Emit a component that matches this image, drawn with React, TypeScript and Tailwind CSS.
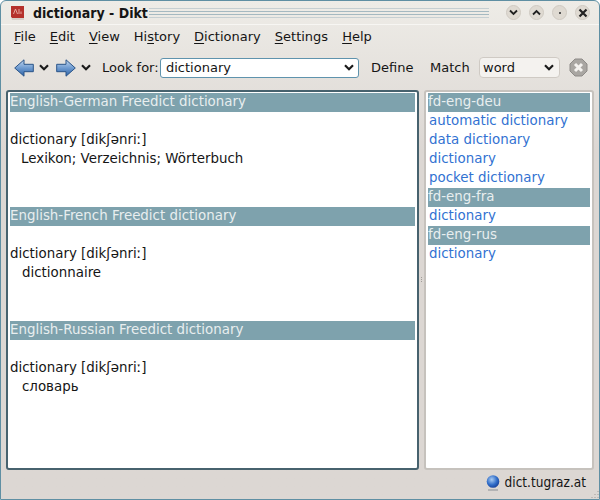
const font = { fontFamily: '"DejaVu Sans", sans-serif' };

function Mnemonic({ pre = '', u, post }: { pre?: string; u: string; post: string }) {
  return (
    <span>
      {pre}
      <span className="underline underline-offset-2">{u}</span>
      {post}
    </span>
  );
}

function Chevron({ className = '' }: { className?: string }) {
  return (
    <svg width="10" height="7" viewBox="0 0 10 7" className={className}>
      <path d="M1 1.2 L5 5.2 L9 1.2" fill="none" stroke="#1c1c1c" strokeWidth="2.2" />
    </svg>
  );
}

function WinButton({ children }: { children: React.ReactNode }) {
  return (
    <div className="w-[15px] h-[15px] rounded-full bg-[#dfdad2] border border-[#cfcac2] flex items-center justify-center">
      {children}
    </div>
  );
}

function ArrowLeft() {
  return (
    <svg width="20" height="18" viewBox="0 0 20 18">
      <defs>
        <linearGradient id="ab" x1="0" y1="0" x2="0" y2="1">
          <stop offset="0" stopColor="#c3d8f0" />
          <stop offset="0.5" stopColor="#6f9bd0" />
          <stop offset="1" stopColor="#2c62a6" />
        </linearGradient>
      </defs>
      <path d="M0.7 9 L10 0.8 V5.3 H19.3 V12.7 H10 V17.2 Z" fill="url(#ab)" stroke="#2a5488" strokeWidth="1" />
    </svg>
  );
}

function ArrowRight() {
  return (
    <svg width="20" height="18" viewBox="0 0 20 18">
      <path d="M19.3 9 L10 0.8 V5.3 H0.7 V12.7 H10 V17.2 Z" fill="url(#ab)" stroke="#2a5488" strokeWidth="1" />
    </svg>
  );
}

function Section({ title, word, meaning, indent }: { title: string; word: string; meaning: string; indent: string }) {
  return (
    <div className="h-[114px]">
      <div className="h-[19px] leading-[17px] bg-[#7ea2ad] text-[#e8eeef]">{title}</div>
      <div className="mt-[19px] h-[19px] leading-[17px]">{word}</div>
      <div className={`h-[19px] leading-[17px] ${indent}`}>{meaning}</div>
    </div>
  );
}

const matches = [
  { t: 'fd-eng-deu', h: true },
  { t: 'automatic dictionary' },
  { t: 'data dictionary' },
  { t: 'dictionary' },
  { t: 'pocket dictionary' },
  { t: 'fd-eng-fra', h: true },
  { t: 'dictionary' },
  { t: 'fd-eng-rus', h: true },
  { t: 'dictionary' },
];

export default function App() {
  return (
    <div
      style={font}
      className="relative w-[600px] h-[500px] flex flex-col overflow-hidden bg-gradient-to-b from-[#eeece7] from-0% to-[#dcd7d3] to-30% border border-[#5f8fa3] rounded-t-md text-[13.4px] text-[#151515]"
    >
      {/* title bar */}
      <div className="h-[24px] shrink-0 flex items-center pl-[9px] pr-[9px] border-b border-[#f7f6f3]">
        <svg width="15" height="16" viewBox="0 0 15 16" className="shrink-0">
          <path d="M1 1 H14 V13 H2 L1 12 Z" fill="#b5312c" />
          <path d="M1 12 L2 15 H14 V13 H2 Z" fill="#d8d0ca" />
          <path d="M3.5 9 L5.5 4 L7.5 9 M9 4 V9 M11 6.5 V9" fill="none" stroke="#eab3aa" strokeWidth="0.9" />
        </svg>
        <span className="ml-[8px] w-[110px] font-bold font-stretch-condensed text-[14px] leading-none whitespace-nowrap">dictionary - Dikt</span>
        <div className="flex-1 ml-[6px] mr-[17px] flex flex-col gap-[2px]">
          <div className="h-px bg-[#c6cfd2]" />
          <div className="h-px bg-[#a5b9c1]" />
          <div className="h-px bg-[#a5b9c1]" />
          <div className="h-px bg-[#c6cfd2]" />
        </div>
        <div className="flex gap-[8px]">
          <WinButton>
            <svg width="9" height="7" viewBox="0 0 9 7"><path d="M1 1.5 L4.5 5 L8 1.5" fill="none" stroke="#222" strokeWidth="1.8" /></svg>
          </WinButton>
          <WinButton>
            <svg width="9" height="7" viewBox="0 0 9 7"><path d="M1 5.5 L4.5 2 L8 5.5" fill="none" stroke="#222" strokeWidth="1.8" /></svg>
          </WinButton>
          <WinButton>
            <div className="w-[2px] h-[2px] bg-[#555]" />
          </WinButton>
          <WinButton>
            <svg width="10" height="10" viewBox="0 0 10 10"><path d="M1.5 1.5 L8.5 8.5 M8.5 1.5 L1.5 8.5" stroke="#222" strokeWidth="2.2" /></svg>
          </WinButton>
        </div>
      </div>

      {/* menu */}
      <div className="h-[22px] shrink-0 mt-[1px] flex items-center pl-[13px] gap-[14px] text-[13px] whitespace-nowrap">
        <Mnemonic u="F" post="ile" />
        <Mnemonic u="E" post="dit" />
        <Mnemonic u="V" post="iew" />
        <Mnemonic pre="Hi" u="s" post="tory" />
        <Mnemonic u="D" post="ictionary" />
        <Mnemonic u="S" post="ettings" />
        <Mnemonic u="H" post="elp" />
      </div>

      {/* toolbar */}
      <div className="h-[42px] pb-[3px] shrink-0 flex items-center pl-[13px] text-[13px]">
        <ArrowLeft />
        <Chevron className="ml-[5px]" />
        <div className="ml-[7px]"><ArrowRight /></div>
        <Chevron className="ml-[5px]" />
        <span className="ml-[11px] w-[54px] whitespace-nowrap">Look for:</span>
        <div className="ml-[4px] w-[199px] h-[20px] rounded-[3px] border border-[#5f93ad] bg-white flex items-center justify-between pl-[5px] pr-[4px]">
          <span>dictionary</span>
          <Chevron />
        </div>
        <span className="ml-[12px] w-[42px]">Define</span>
        <span className="ml-[17px] w-[38px]">Match</span>
        <div className="ml-[11px] w-[81px] h-[21px] rounded-[4px] border border-[#cfcac4] bg-[#f4f2ef] flex items-center justify-between pl-[3px] pr-[5px]">
          <span>word</span>
          <Chevron />
        </div>
        <svg width="19" height="19" viewBox="0 0 19 19" className="ml-[9px]">
          <path d="M6 1 H13 L18 6 V13 L13 18 H6 L1 13 V6 Z" fill="#a9a6a2" stroke="#8e8b88" />
          <path d="M6 6 L13 13 M13 6 L6 13" stroke="#f4f2ef" strokeWidth="3" />
        </svg>
      </div>

      {/* panes */}
      <div className="h-[380px] shrink-0 flex pl-[5px] pr-[5px] gap-[5px]">
        <div className="w-[413px] h-full rounded-[3px] border-2 border-[#47626e] bg-white pl-[2px] pr-[2px] pt-[1px]">
          <Section title="English-German Freedict dictionary" word="dictionary [dikʃənriː]" meaning="Lexikon; Verzeichnis; Wörterbuch" indent="pl-[11px]" />
          <Section title="English-French Freedict dictionary" word="dictionary [dikʃənriː]" meaning="dictionnaire" indent="pl-[12px]" />
          <Section title="English-Russian Freedict dictionary" word="dictionary [dikʃənriː]" meaning="словарь" indent="pl-[12px]" />
        </div>
        <div className="w-[170px] h-full rounded-[3px] border-2 border-[#c6c2bd] bg-white pl-[2px] pr-[2px] pt-[1px] text-[#3272d2]">
          {matches.map((m, i) => (
            <div
              key={i}
              className={`h-[19px] leading-[17px] ${m.h ? 'bg-[#7ea2ad] text-[#e8eeef]' : 'pl-[1px]'}`}
            >
              {m.t}
            </div>
          ))}
        </div>
      </div>

      {/* status bar */}
      <div className="flex-1 flex items-center justify-end pr-[13px] pb-[4px] text-[13.5px] font-stretch-condensed">
        <svg width="14" height="16" viewBox="0 0 14 16" className="mr-[5px]">
          <defs>
            <radialGradient id="gl" cx="0.4" cy="0.35" r="0.7">
              <stop offset="0" stopColor="#a9cbf2" />
              <stop offset="0.6" stopColor="#2f6cc8" />
              <stop offset="1" stopColor="#183f96" />
            </radialGradient>
          </defs>
          <circle cx="7" cy="6.5" r="6.3" fill="url(#gl)" />
          <rect x="2" y="14.5" width="10" height="1" fill="#8a8f96" />
        </svg>
        <span>dict.tugraz.at</span>
      </div>

      {/* splitter and resize grips */}
      <div className="absolute left-[420px] top-[276px] flex flex-col gap-[1px]">
        <div className="w-px h-px bg-[#a09c98]" />
        <div className="w-px h-px bg-[#a09c98]" />
        <div className="w-px h-px bg-[#a09c98]" />
      </div>
      <svg width="10" height="10" viewBox="0 0 10 10" className="absolute right-0 bottom-0">
        <path d="M9 2 V3 M6 5 V6 M9 5 V6 M3 8 V9 M6 8 V9 M9 8 V9" stroke="#a09c98" strokeWidth="1" />
      </svg>
    </div>
  );
}
